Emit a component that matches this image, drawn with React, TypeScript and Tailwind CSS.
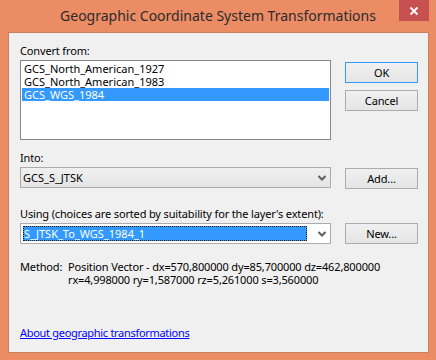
const FONT = { fontFamily: '"Noto Sans", "Open Sans", sans-serif' };

function Chevron() {
  return (
    <svg width="8" height="6" viewBox="0 0 8 6" className="shrink-0">
      <path d="M0.5 1 L4 4.5 L7.5 1" fill="none" stroke="#5f5f5f" strokeWidth="2" />
    </svg>
  );
}

function Btn({ label, focused }: { label: string; focused?: boolean }) {
  return (
    <button
      type="button"
      className={
        focused
          ? "flex h-[21px] w-[73px] items-center justify-center border border-[#3399ff] bg-gradient-to-b from-[#f0f0f0] to-[#e5e5e5] leading-none text-black"
          : "flex h-[21px] w-[73px] items-center justify-center border border-[#acacac] bg-gradient-to-b from-[#f0f0f0] to-[#e5e5e5] leading-none text-black"
      }
    >
      {label}
    </button>
  );
}

export default function App() {
  const items = ["GCS_North_American_1927", "GCS_North_American_1983", "GCS_WGS_1984"];

  return (
    <div
      className="flex h-[360px] w-[436px] flex-col bg-[#ec8c65] text-[11px] tracking-[-0.15px] text-black"
      style={FONT}
    >
      {/* title bar */}
      <div className="flex h-[32px] shrink-0">
        <div className="flex flex-1 items-center justify-center pl-[37px] pb-[1px] text-[14px] tracking-normal text-[#2b2b2b]">
          Geographic Coordinate System Transformations
        </div>
        <div className="mr-[7px] flex h-[21px] w-[30px] items-center justify-center bg-[#c75050]">
          <svg width="10" height="10" viewBox="0 0 10 10">
            <path d="M1.5 1.5 L8.5 8.5 M8.5 1.5 L1.5 8.5" stroke="#fff" strokeWidth="1.8" />
          </svg>
        </div>
      </div>

      {/* client */}
      <div className="ml-[8px] flex h-[321px] w-[421px] flex-col border border-[#c9805f] bg-[#f0f0f0] pl-[11px] pt-[10px]">
        <div className="h-[16px] leading-[16px]">Convert from:</div>
        <div className="mt-[1px] flex items-start">
          <div className="h-[80px] w-[311px] border border-[#828790] bg-white px-[1px] pt-[1px]">
            {items.map((it, i) => (
              <div
                key={it}
                className={
                  i === 2
                    ? "h-[13px] bg-[#3399ff] pl-[2px] leading-[13px] tracking-normal text-white"
                    : "h-[13px] pl-[2px] leading-[13px] tracking-normal"
                }
              >
                {it}
              </div>
            ))}
          </div>
          <div className="ml-[14px] mt-[2px] flex flex-col gap-[7px]">
            <Btn label="OK" focused />
            <Btn label="Cancel" />
          </div>
        </div>

        <div className="mt-[10px] h-[16px] leading-[16px]">Into:</div>
        <div className="mt-[1px] flex items-start">
          <div className="flex h-[21px] w-[311px] items-center border border-[#acacac] bg-gradient-to-b from-[#f0f0f0] to-[#e5e5e5] pl-[2px] pr-[4px]">
            <span className="flex-1 leading-none tracking-normal">GCS_S_JTSK</span>
            <Chevron />
          </div>
          <div className="ml-[14px] mt-[1px]">
            <Btn label="Add..." />
          </div>
        </div>

        <div className="mt-[17px] h-[16px] leading-[16px]">
          Using (choices are sorted by suitability for the layer's extent):
        </div>
        <div className="mt-[1px] flex items-start">
          <div className="flex h-[21px] w-[311px] items-center border border-[#abadb3] bg-white pl-[2px] pr-[4px]">
            <span className="mr-[11px] flex h-[15px] flex-1 items-center border border-dotted border-[#2a1a00] bg-[#3399ff] leading-none tracking-normal text-white">
              S_JTSK_To_WGS_1984_1
            </span>
            <Chevron />
          </div>
          <div className="ml-[14px]">
            <Btn label="New..." />
          </div>
        </div>

        <div className="mt-[16px] flex leading-[13px]">
          <div className="w-[48px]">Method:</div>
          <div>
            <div>Position Vector - dx=570,800000 dy=85,700000 dz=462,800000</div>
            <div>rx=4,998000 ry=1,587000 rz=5,261000 s=3,560000</div>
          </div>
        </div>

        <div className="mt-auto mb-[11px] leading-[16px]">
          <a href="#" className="tracking-[-0.3px] text-[#0000ff] underline">
            About geographic transformations
          </a>
        </div>
      </div>
    </div>
  );
}
